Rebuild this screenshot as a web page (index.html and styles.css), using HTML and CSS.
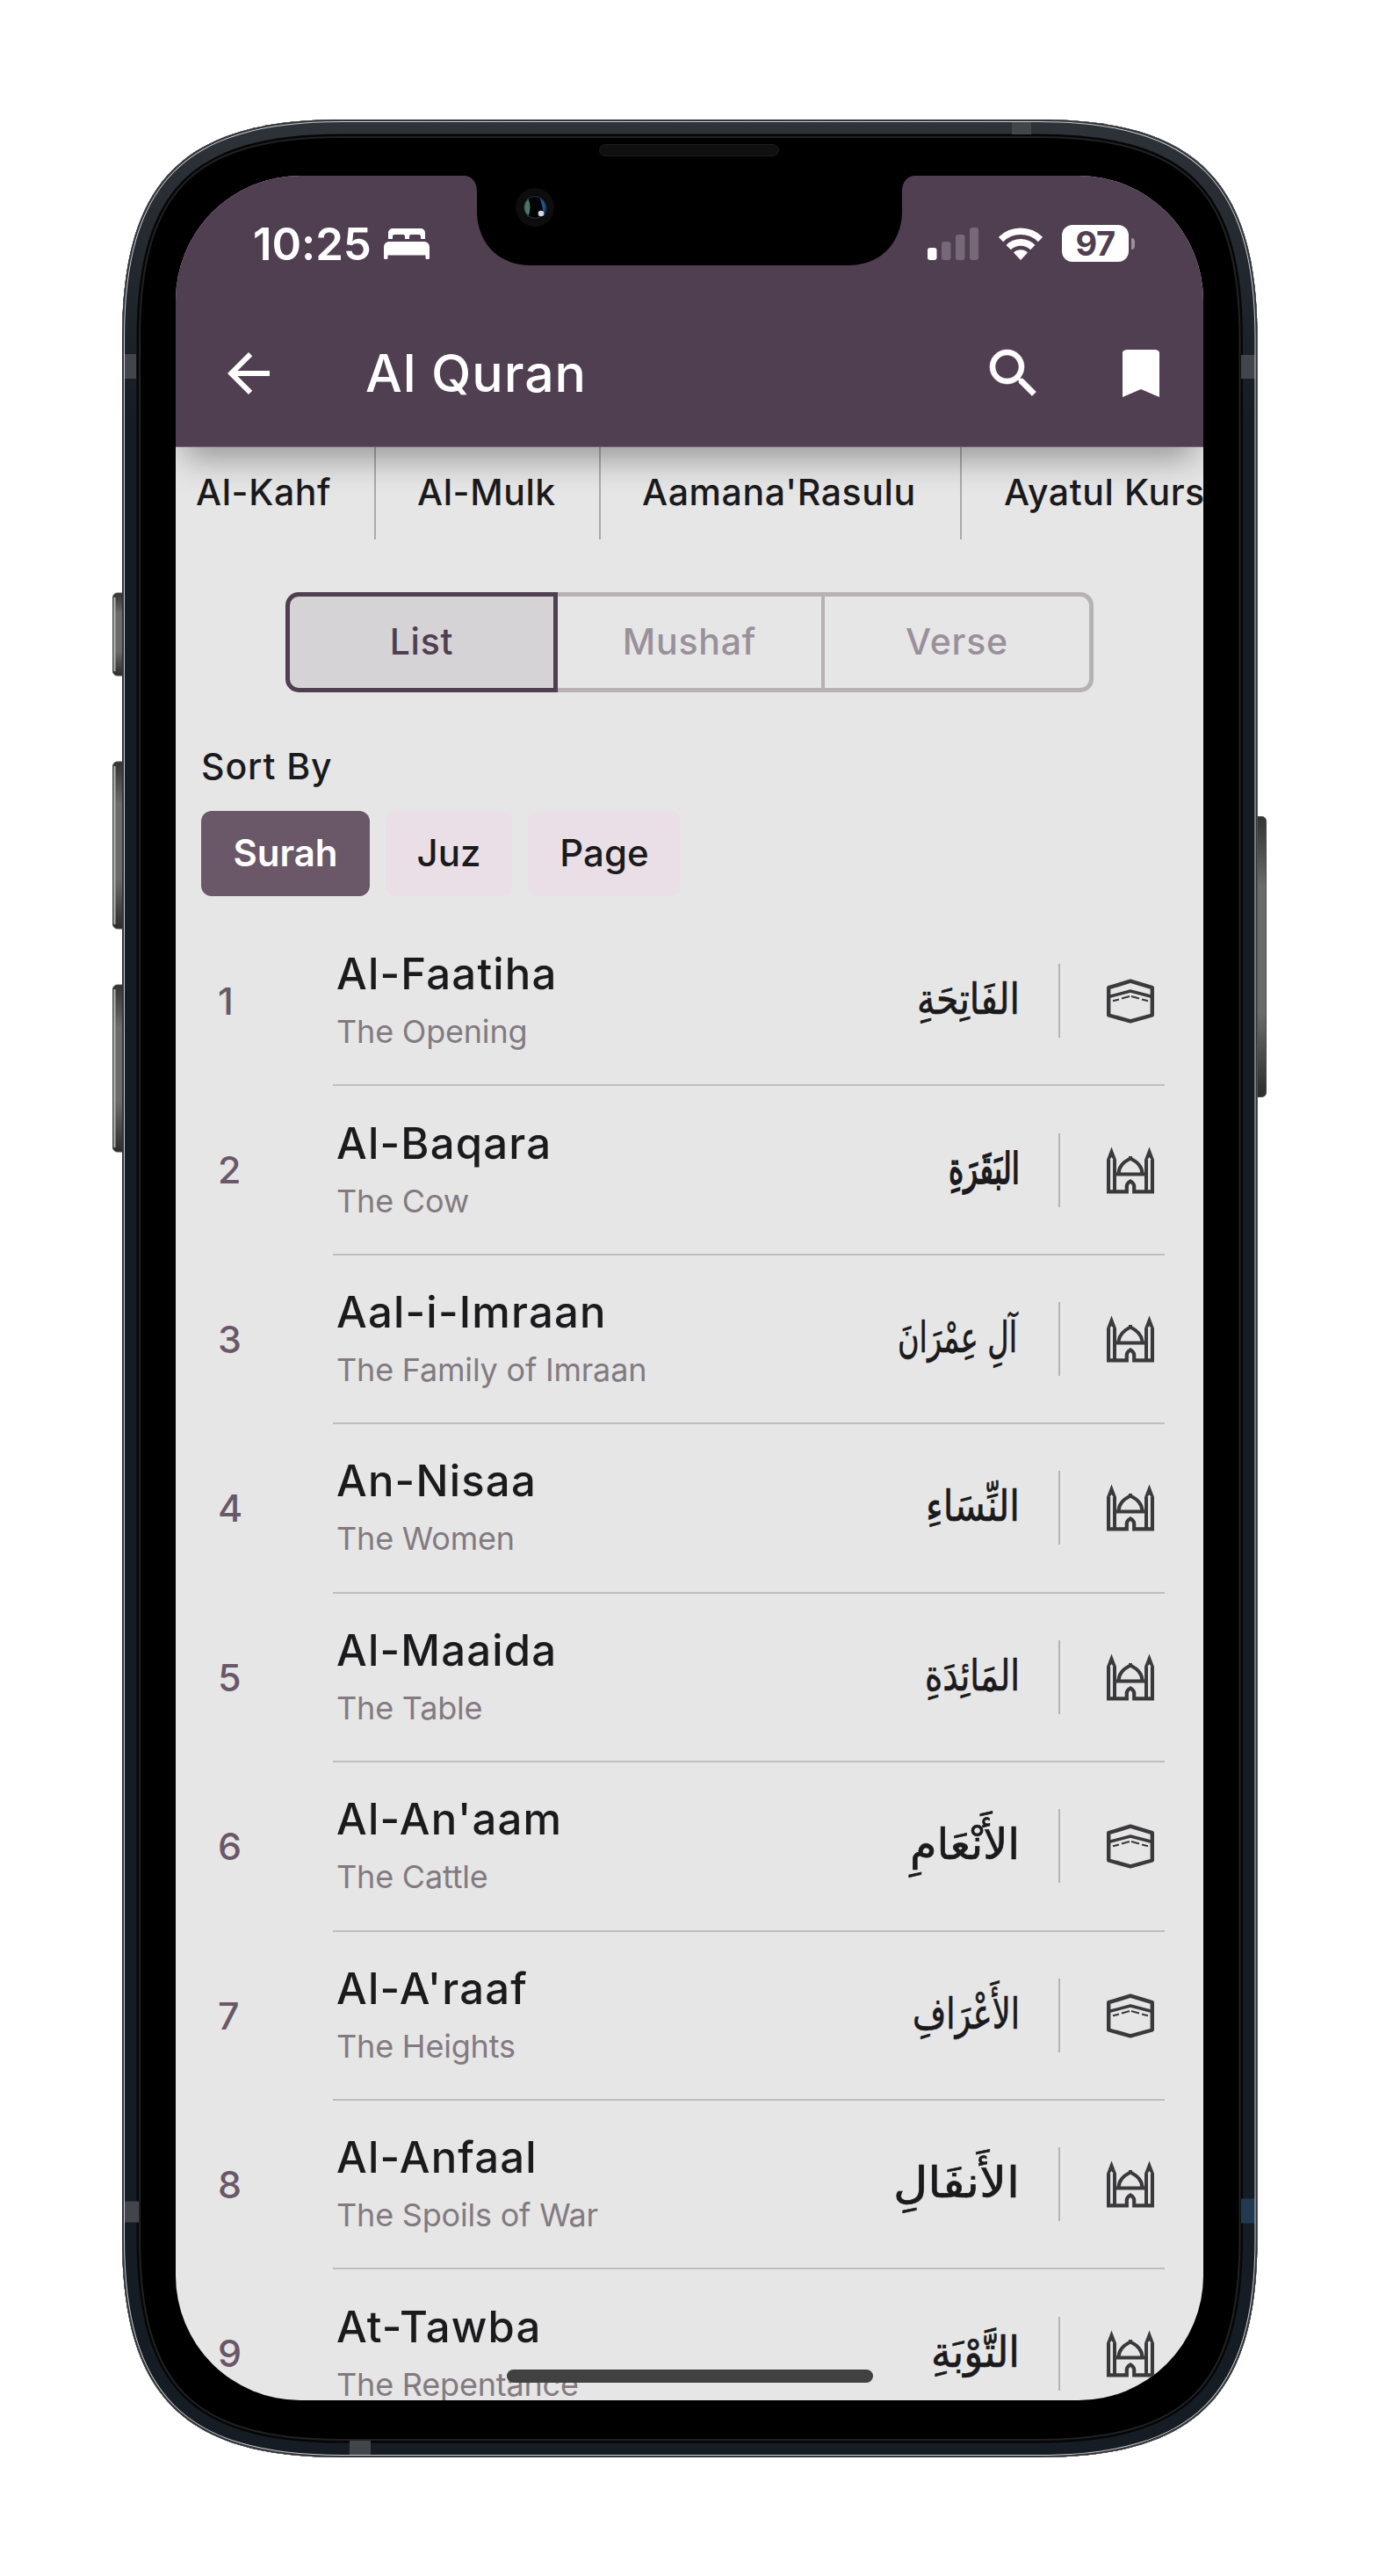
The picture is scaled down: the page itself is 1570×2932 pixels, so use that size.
FILE: index.html
```html
<!DOCTYPE html>
<html lang="en">
<head>
<meta charset="utf-8">
<title>Al Quran</title>
<link rel="stylesheet" href="styles.css">
</head>
<body>
<svg class="defs" width="0" height="0" aria-hidden="true">
  <symbol id="kaaba" viewBox="0 0 54 54">
    <g fill="none" stroke="#3b393c" stroke-linejoin="round">
      <path d="M2.200 12.200L27 4.700L51.800 12.200V43.500L27 50.300L2.200 43.500Z" stroke-width="4.400"/>
      <path d="M2 22.500L27 16L52 22.500" stroke-width="3.400"/>
      <path d="M7 27.300l7-1.800M17 24.500l9-2.500M28 22l9 2.500M40 25.500l7 1.800" stroke-width="2.200"/>
    </g>
  </symbol>
  <symbol id="mosque" viewBox="0 0 54 54">
    <g fill="none" stroke="#3b393c">
      <path d="M2 15V51.300H22.800V45Q22.800 42 27 39.500Q31.200 42 31.200 45V51.300H52V15" stroke-width="4.200"/>
      <path d="M9 15V51M45 15V51M9 31.500H45" stroke-width="4"/>
      <path d="M13.500 31C13.500 22 20 17 27 13.500C34 17 40.500 22 40.500 31" stroke-width="4"/>
    </g>
    <path d="M0 15L5.500 .5L11 15L9 17L5.500 12L2 17ZM43 15L48.500 .5L54 15L52 17L48.500 12L45 17ZM25 11h4v5h-4z" fill="#3b393c"/>
  </symbol>
</svg>
<div class="stage">
  <svg class="hardware" viewBox="0 0 1570 2932" aria-hidden="true">
    <defs>
      <linearGradient id="key" x1="0" y1="0" x2="0" y2="1">
        <stop offset="0" stop-color="#333"/><stop offset=".25" stop-color="#6b6b6b"/><stop offset=".7" stop-color="#6b6b6b"/><stop offset="1" stop-color="#2c2c2c"/>
      </linearGradient>
      <linearGradient id="band" gradientUnits="userSpaceOnUse" x1="0" y1="136" x2="0" y2="480">
        <stop offset="0" stop-color="#2d3338"/><stop offset="1" stop-color="#161c23"/>
      </linearGradient>
      <path id="body" d="M139 386C139 206 209 136 389 136H1181.500C1361.500 136 1431.500 206 1431.500 386V2547C1431.500 2727 1361.500 2797 1181.500 2797H389C209 2797 139 2727 139 2547Z"/>
      <clipPath id="clip"><use href="#body"/></clipPath>
    </defs>
    <g fill="url(#key)" stroke="#4a4a4a">
      <rect x="128.500" y="675" width="18" height="94" rx="5"/>
      <rect x="128.500" y="867" width="18" height="190" rx="5"/>
      <rect x="128.500" y="1121" width="18" height="190" rx="5"/>
      <rect x="1424" y="929.500" width="17.500" height="319" rx="5"/>
    </g>
    <path d="M130.500 680v84M130.500 872v180M130.500 1126v180" stroke="#b5b5b5" stroke-width="2"/>
    <g clip-path="url(#clip)">
      <use href="#body" fill="#000" stroke="#212121" stroke-width="42"/>
      <use href="#body" fill="none" stroke="#050608" stroke-width="38"/>
      <use href="#body" fill="none" stroke="url(#band)" stroke-width="33"/>
      <path fill="#42454a" d="M139 403h16v28h-16zM1413 404h18v27h-18zM139 2505.500h19v24h-19zM1152 138h22v15h-22zM398 2778h24v19h-24z"/>
      <path fill="#213a52" d="M1413 2502.500h18v28h-18z"/>
      <use href="#body" fill="none" stroke="#c9ccd2" stroke-width="6"/>
      <use href="#body" fill="none" stroke="#333538" stroke-width="4"/>
    </g>
  </svg>
  <main class="screen">
    <header class="top">
      <div class="status">
        <span class="time">10:25</span>
        <svg class="bed" viewBox="0 0 52 35" fill="#fff"><path d="M5 12V5a5 5 0 0 1 5-5H42a5 5 0 0 1 5 5V12H42V9a2 2 0 0 0-2-2H31a2 2 0 0 0-2 2V12H24V9a2 2 0 0 0-2-2H12a2 2 0 0 0-2 2V12Z"/><path d="M0 21a6 6 0 0 1 6-6H46a6 6 0 0 1 6 6V33.500a1.500 1.500 0 0 1-1.500 1.500H49a1.500 1.500 0 0 1-1.500-1.500V30.500H4.500V33.500A1.500 1.500 0 0 1 3 35H1.500A1.500 1.500 0 0 1 0 33.500Z"/></svg>
        <span class="grow"></span>
        <svg class="signal" viewBox="0 0 58 37" fill="#fff"><rect y="23" width="10.500" height="14" rx="3"/><g opacity=".22"><rect x="16" y="16" width="10.500" height="21" rx="3"/><rect x="32" y="8" width="10.500" height="29" rx="3"/><rect x="48" width="10" height="37" rx="3"/></g></svg>
        <svg class="wifi" viewBox="0 0 50 37" fill="none" stroke="#fff" stroke-width="7.600"><path d="M2.500 13.500A32 32 0 0 1 47.500 13.500"/><path d="M11.200 22.600A19.500 19.500 0 0 1 38.800 22.600"/><path d="M25 37L17 28.500A11.500 11.500 0 0 1 33 28.500Z" fill="#fff" stroke="none"/></svg>
        <span class="battery">97</span><span class="nub"></span>
      </div>
      <div class="appbar">
        <svg class="icon" viewBox="0 0 24 24"><path d="M20 11H7.830l5.590-5.590L12 4l-8 8 8 8 1.410-1.410L7.830 13H20v-2z"/></svg>
        <h1>Al Quran</h1>
        <span class="grow"></span>
        <svg class="icon search" viewBox="0 0 24 24"><path d="M15.500 14h-.79l-.28-.27A6.471 6.471 0 0 0 16 9.500 6.500 6.500 0 1 0 9.500 16c1.610 0 3.090-.59 4.230-1.570l.27.28v.79l5 4.990L20.490 19l-4.990-5zm-6 0C7.010 14 5 11.990 5 9.500S7.010 5 9.500 5 14 7.010 14 9.500 11.990 14 9.500 14z"/></svg>
        <svg class="icon mark" viewBox="0 0 24 24"><path d="M17 3H7c-1.100 0-1.990.4-1.990 1.200L5 21l7-3 7 3V4.200C19 3.400 18.100 3 17 3z"/></svg>
      </div>
    </header>
    <nav class="quick">
      <a class="q1">Al-Kahf</a><a class="q2">Al-Mulk</a><a class="q3">Aamana'Rasulu</a><a class="q4">Ayatul Kursi</a>
    </nav>
    <div class="segments"><span class="seg on">List</span><span class="seg">Mushaf</span><span class="seg last">Verse</span></div>
    <p class="sort">Sort By</p>
    <div class="chips"><span class="chip active">Surah</span><span class="chip juz">Juz</span><span class="chip page">Page</span></div>
    <ol class="list">
      <li class="row"><span class="num">1</span><div class="body"><div class="names"><b>Al-Faatiha</b><small>The Opening</small></div><svg class="ar" viewBox="0 0 150 84"><text x="149" y="57" textLength="117" lengthAdjust="spacingAndGlyphs">الفَاتِحَةِ</text></svg><i></i><svg class="place"><use href="#kaaba"/></svg></div></li>
      <li class="row"><span class="num">2</span><div class="body"><div class="names"><b>Al-Baqara</b><small>The Cow</small></div><svg class="ar heavy" viewBox="0 0 150 84"><text x="149" y="57" textLength="81" lengthAdjust="spacingAndGlyphs">البَقَرَةِ</text></svg><i></i><svg class="place"><use href="#mosque"/></svg></div></li>
      <li class="row"><span class="num">3</span><div class="body"><div class="names"><b>Aal-i-Imraan</b><small>The Family of Imraan</small></div><svg class="ar" viewBox="0 0 150 84"><text x="146" y="57" textLength="136" lengthAdjust="spacingAndGlyphs">آلِ عِمْرَانَ</text></svg><i></i><svg class="place"><use href="#mosque"/></svg></div></li>
      <li class="row"><span class="num">4</span><div class="body"><div class="names"><b>An-Nisaa</b><small>The Women</small></div><svg class="ar" viewBox="0 0 150 84"><text x="149" y="57" textLength="107" lengthAdjust="spacingAndGlyphs">النِّسَاءِ</text></svg><i></i><svg class="place"><use href="#mosque"/></svg></div></li>
      <li class="row"><span class="num">5</span><div class="body"><div class="names"><b>Al-Maaida</b><small>The Table</small></div><svg class="ar" viewBox="0 0 150 84"><text x="149" y="57" textLength="108" lengthAdjust="spacingAndGlyphs">المَائِدَةِ</text></svg><i></i><svg class="place"><use href="#mosque"/></svg></div></li>
      <li class="row"><span class="num">6</span><div class="body"><div class="names"><b>Al-An'aam</b><small>The Cattle</small></div><svg class="ar" viewBox="0 0 150 84"><text x="149" y="57" textLength="125" lengthAdjust="spacingAndGlyphs">الأَنْعَامِ</text></svg><i></i><svg class="place"><use href="#kaaba"/></svg></div></li>
      <li class="row"><span class="num">7</span><div class="body"><div class="names"><b>Al-A'raaf</b><small>The Heights</small></div><svg class="ar" viewBox="0 0 150 84"><text x="149" y="57" textLength="122" lengthAdjust="spacingAndGlyphs">الأَعْرَافِ</text></svg><i></i><svg class="place"><use href="#kaaba"/></svg></div></li>
      <li class="row"><span class="num">8</span><div class="body"><div class="names"><b>Al-Anfaal</b><small>The Spoils of War</small></div><svg class="ar" viewBox="0 0 150 84"><text x="149" y="57" textLength="144" lengthAdjust="spacingAndGlyphs">الأَنفَالِ</text></svg><i></i><svg class="place"><use href="#mosque"/></svg></div></li>
      <li class="row"><span class="num">9</span><div class="body"><div class="names"><b>At-Tawba</b><small>The Repentance</small></div><svg class="ar" viewBox="0 0 150 84"><text x="149" y="57" textLength="101" lengthAdjust="spacingAndGlyphs">التَّوْبَةِ</text></svg><i></i><svg class="place"><use href="#mosque"/></svg></div></li>
    </ol>
    <div class="home"></div>
    <svg class="notch" viewBox="0 0 514 102" aria-hidden="true">
      <path d="M0 0C9 0 15 7 15 18V40C15 76 39 102 76 102H438C475 102 499 76 499 40V18C499 7 505 0 514 0Z"/>
      <circle cx="81" cy="36" r="22" fill="#0d0d0d"/><circle cx="81" cy="36" r="14" fill="#020304"/>
      <path d="M73 25Q65 36 73 47Q78 36 73 25Z" fill="#4b7766"/><path d="M86 24Q100 34 91 46Q90 34 86 24Z" fill="#1f5595"/>
      <circle cx="81" cy="36" r="12.500" fill="none" stroke="#222a30" stroke-width="1.500"/><circle cx="88" cy="43" r="3.300" fill="#cfd8ee"/>
    </svg>
  </main>
  <div class="speaker"></div>
</div>
</body>
</html>
```
FILE: styles.css
```css
* { box-sizing: border-box; }
body { margin: 0; background: #fff; font-family: Inter, "Liberation Sans", sans-serif; }
.defs { position: absolute; }
.stage { position: relative; width: 1570px; height: 2932px; padding: 200px; overflow: hidden; }
.hardware { position: absolute; inset: 0; width: 1570px; height: 2932px; }
.speaker { position: absolute; left: 682px; top: 164px; width: 205px; height: 14px; border-radius: 7px; background: #101010; border: 1px solid #1c1c1c; }
.screen { position: relative; display: flex; flex-direction: column; width: 1170px; height: 2532px; border-radius: 142px; overflow: hidden; background: #e6e6e6; color: #1b1a1c; }
.notch { position: absolute; left: 328px; top: 0; width: 514px; height: 102px; z-index: 3; }
.home { position: absolute; left: 377px; top: 2497px; width: 417px; height: 15px; border-radius: 8px; background: #414141; }
.grow { flex: 1; }

.top { position: relative; z-index: 1; flex: none; height: 309px; background: #503e51; border-bottom: 1px solid #775f74; color: #fff; box-shadow: 0 22px 36px -10px rgba(0, 0, 0, .36); }
.status { display: flex; align-items: center; height: 154px; padding: 0 78px 0 88px; }
.time { width: 149px; font-size: 51px; font-weight: 560; letter-spacing: -.1px; }
.bed { width: 52px; height: 35px; }
.signal { width: 58px; height: 37px; }
.wifi { width: 50px; height: 37px; margin: 0 22px 0 23px; }
.battery { width: 76px; height: 42px; border-radius: 12px; background: #fff; color: #503e51; font-size: 38px; font-weight: 700; line-height: 42px; text-align: center; letter-spacing: -.5px; }
.nub { width: 4px; height: 13px; margin-left: 3px; border-radius: 0 5px 5px 0; background: #9a8f9b; }
.appbar { display: flex; align-items: center; height: 142px; padding: 0 35px 0 47px; }
.icon { width: 72px; height: 72px; fill: #fff; }
.search { stroke: #fff; stroke-width: .2; }
.mark { margin-left: 73px; }
h1 { margin: -2px 0 0 97px; font-size: 59px; font-weight: 500; letter-spacing: .9px; }

.quick { flex: none; display: flex; height: 105px; font-size: 41px; font-weight: 480; line-height: 103px; white-space: nowrap; overflow: hidden; letter-spacing: .6px; }
.quick a { flex: none; border-right: 2px solid #aea8ad; }
.q1 { width: 228px; padding-left: 23px; }
.q2 { width: 256px; padding-left: 47px; }
.q3 { width: 411px; padding-left: 47px; }
.q4 { width: 340px; padding-left: 48px; }

.segments { flex: none; display: flex; width: 920px; height: 114px; margin: 60px 0 0 125px; font-size: 41px; font-weight: 480; line-height: 103px; text-align: center; color: #9a909b; letter-spacing: .8px; }
.seg { width: 304px; border: solid #b7b1b6; border-width: 5px 4px 5px 0; }
.seg.on { width: 310px; border: 5px solid #503e51; border-radius: 15px 0 0 15px; background: #d5d3d6; color: #503e51; }
.seg.last { width: 306px; border-right-width: 5px; border-radius: 0 15px 15px 0; }
.sort { margin: 59px 0 0 29px; font-size: 41px; font-weight: 480; line-height: 50px; letter-spacing: .9px; }
.chips { flex: none; display: flex; gap: 18px; height: 97px; margin: 26px 0 24px 29px; font-size: 42px; font-weight: 490; line-height: 96px; text-align: center; }
.chip { border-radius: 12px; background: #eadfe7; width: 144px; }
.chip.active { width: 192px; background: #6a5868; color: #fff; font-weight: 580; }
.chip.page { width: 174px; }

.list { margin: 0; padding: 0; list-style: none; }
.row { display: flex; height: 192.430px; }
.num { flex: none; width: 179px; padding-left: 48px; font-size: 43px; font-weight: 480; line-height: 191px; color: #6a5868; }
.body { display: flex; align-items: center; width: 947px; padding: 0 12px 0 4px; border-bottom: 2px solid #c1bcc0; }
.names { flex: 1; display: flex; flex-direction: column; gap: 10px; height: 120px; white-space: nowrap; }
.names b { font-size: 49px; font-weight: 490; line-height: 60px; letter-spacing: 1.2px; }
.names small { font-size: 36px; line-height: 50px; color: #837a81; letter-spacing: -.2px; }
.row i { width: 2px; height: 84px; margin: 0 53px 0 43px; background: #bab2b7; }
.ar { width: 150px; height: 84px; direction: rtl; font: 49px "DejaVu Sans", sans-serif; fill: #1b1a1c; stroke: #1b1a1c; stroke-width: .7; overflow: visible; }
.heavy { stroke-width: 1.8; }
.place { width: 54px; height: 54px; }
```
